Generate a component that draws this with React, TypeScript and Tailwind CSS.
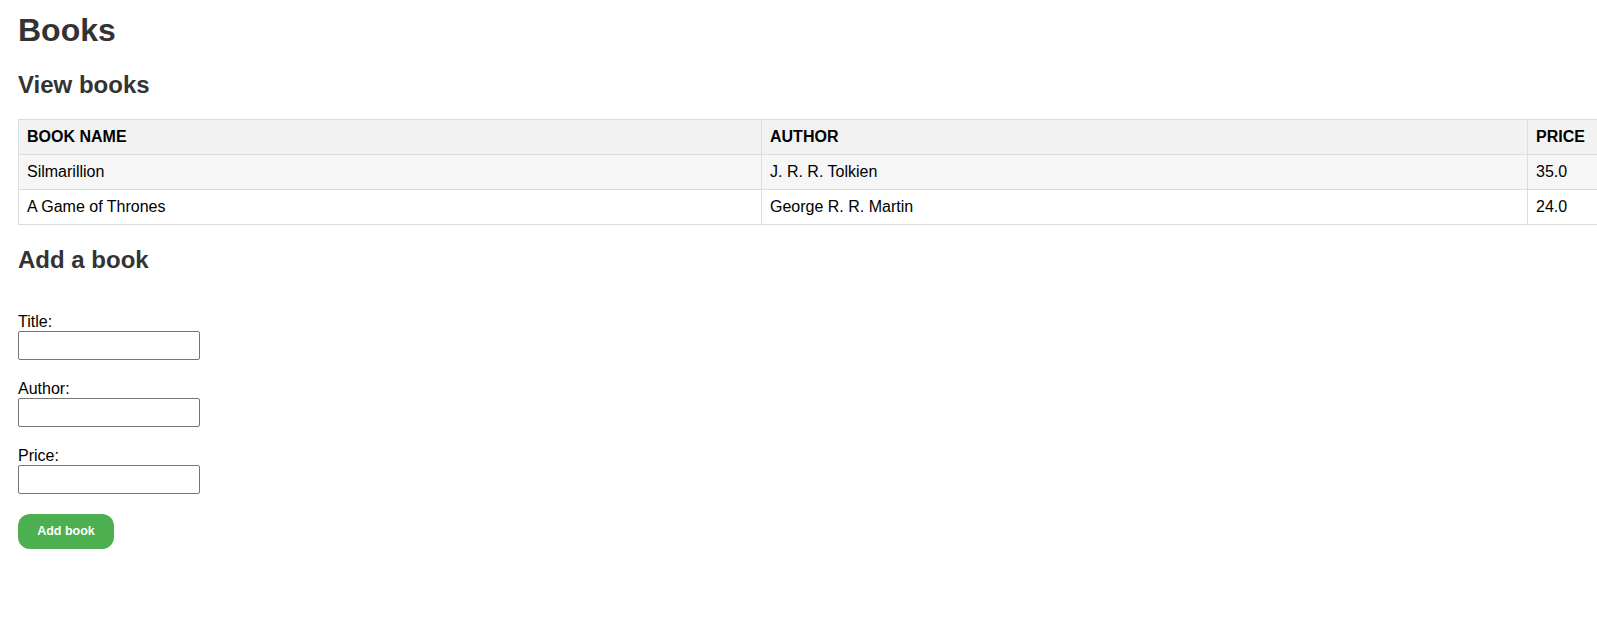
import { useState } from 'react'

const books = [
  { name: 'Silmarillion', author: 'J. R. R. Tolkien', price: '35.0' },
  { name: 'A Game of Thrones', author: 'George R. R. Martin', price: '24.0' },
]

export default function App() {
  const [title, setTitle] = useState('')
  const [author, setAuthor] = useState('')
  const [price, setPrice] = useState('')

  return (
    <div className="overflow-hidden bg-white pl-[18px] font-['Liberation_Sans',Arial,sans-serif] text-black">
      <h1 className="mt-[12px] text-[32px] leading-[37px] font-bold text-[#333]">Books</h1>

      <h2 className="mt-[22px] text-[24px] leading-[28px] font-bold text-[#333]">View books</h2>

      <table className="mt-[20px] w-[1610px] table-fixed border-collapse text-[16px] leading-[18px]">
        <colgroup>
          <col className="w-[743px]" />
          <col className="w-[766px]" />
          <col />
        </colgroup>
        <thead>
          <tr className="bg-[#f2f2f2]">
            <th className="border border-[#ddd] px-2 pt-[8px] pb-[8px] text-left font-bold">BOOK NAME</th>
            <th className="border border-[#ddd] px-2 pt-[8px] pb-[8px] text-left font-bold">AUTHOR</th>
            <th className="border border-[#ddd] px-2 pt-[8px] pb-[8px] text-left font-bold">PRICE</th>
          </tr>
        </thead>
        <tbody>
          {books.map((b, i) => (
            <tr key={b.name} className={i % 2 === 0 ? 'bg-[#f6f6f6]' : 'bg-white'}>
              <td className="border border-[#ddd] px-2 pt-[8px] pb-[8px]">{b.name}</td>
              <td className="border border-[#ddd] px-2 pt-[8px] pb-[8px]">{b.author}</td>
              <td className="border border-[#ddd] px-2 pt-[8px] pb-[8px]">{b.price}</td>
            </tr>
          ))}
        </tbody>
      </table>

      <h2 className="mt-[21px] text-[24px] leading-[28px] font-bold text-[#333]">Add a book</h2>

      <form className="mt-[39px] flex flex-col pb-[70px]" onSubmit={(e) => e.preventDefault()}>
        <label className="block text-[16px] leading-[18px]">Title:</label>
        <input
          value={title}
          onChange={(e) => setTitle(e.target.value)}
          className="h-[29px] w-[182px] rounded-[2px] border border-[#767676] px-1 text-[13px]"
        />
        <label className="mt-[20px] block text-[16px] leading-[18px]">Author:</label>
        <input
          value={author}
          onChange={(e) => setAuthor(e.target.value)}
          className="h-[29px] w-[182px] rounded-[2px] border border-[#767676] px-1 text-[13px]"
        />
        <label className="mt-[20px] block text-[16px] leading-[18px]">Price:</label>
        <input
          value={price}
          onChange={(e) => setPrice(e.target.value)}
          className="h-[29px] w-[182px] rounded-[2px] border border-[#767676] px-1 text-[13px]"
        />
        <button
          type="submit"
          className="mt-[20px] h-[35px] w-[96px] rounded-[12px] bg-[#4caf50] text-[12.5px] font-bold text-white"
        >
          Add book
        </button>
      </form>
    </div>
  )
}
